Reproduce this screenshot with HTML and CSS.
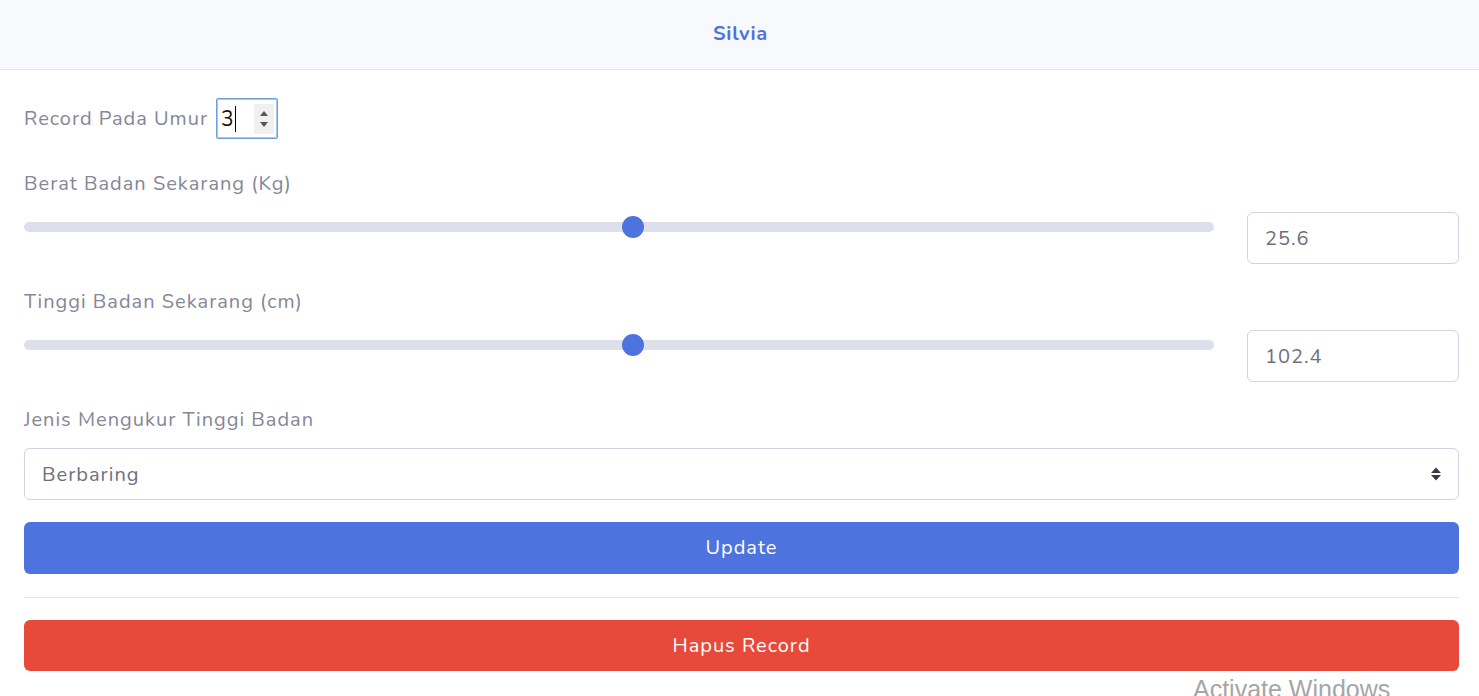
FILE: index.html
```html
<!DOCTYPE html>
<html lang="id">
<head>
<meta charset="utf-8">
<title>Silvia</title>
<link rel="stylesheet" href="styles.css">
</head>
<body>
<div class="card">
  <div class="card-header"><h6 class="title">Silvia</h6></div>
  <div class="card-body">
    <div class="age-row">
      <label class="age-label">Record Pada Umur</label>
      <div class="num-input">
        <span class="num-value">3</span><span class="caret"></span>
        <span class="spin">
          <svg width="12" height="22" viewBox="0 0 12 22"><path d="M2 8 L6 3 L10 8 Z" fill="#555"/><path d="M2 14 L6 19 L10 14 Z" fill="#555"/></svg>
        </span>
      </div>
    </div>

    <div class="group">
      <label class="lbl">Berat Badan Sekarang (Kg)</label>
      <div class="range-row">
        <input class="range" type="range" min="0" max="50" step="0.1" value="25.6">
        <input class="form-control small" type="text" value="25.6">
      </div>
    </div>

    <div class="group">
      <label class="lbl">Tinggi Badan Sekarang (cm)</label>
      <div class="range-row">
        <input class="range" type="range" min="0" max="200" step="0.1" value="102.4">
        <input class="form-control small" type="text" value="102.4">
      </div>
    </div>

    <div class="group last">
      <label class="lbl">Jenis Mengukur Tinggi Badan</label>
      <div class="select-wrap">
        <select class="form-control select">
          <option>Berbaring</option>
          <option>Berdiri</option>
        </select>
        <svg class="select-arrow" width="12" height="16" viewBox="0 0 12 16"><path d="M1 7 L6 1.5 L11 7 Z" fill="#3a3b45"/><path d="M1 9 L6 14.5 L11 9 Z" fill="#3a3b45"/></svg>
      </div>
    </div>

    <button class="btn btn-primary">Update</button>
    <hr class="divider">
    <button class="btn btn-danger">Hapus Record</button>
  </div>
</div>
<div class="watermark">Activate Windows</div>
</body>
</html>
```

FILE: styles.css
```css
html, body {
  margin: 0;
  padding: 0;
  background: #ffffff;
  overflow: hidden;
}
body {
  font-family: "Nunito", "Open Sans", "Noto Sans", sans-serif;
  font-size: 20px;
  letter-spacing: 1px;
  color: #858796;
  width: 1479px;
  height: 696px;
  position: relative;
}
.card {
  display: flex;
  flex-direction: column;
}
.card-header {
  box-sizing: border-box;
  height: 70px;
  background: #f8f9fc;
  border-bottom: 1px solid #e3e6f0;
  display: flex;
  align-items: center;
  justify-content: center;
}
.title {
  margin: 0;
  font-size: 20px;
  font-weight: 700;
  color: #4e73df;
  letter-spacing: 0.8px;
  padding-bottom: 2px;
  padding-left: 2px;
}
.card-body {
  padding: 28px 20px 0 24px;
  display: flex;
  flex-direction: column;
}
.age-row {
  display: flex;
  align-items: center;
  height: 41px;
  margin-bottom: 30px;
}
.age-label {
  line-height: 30px;
  margin-right: 8px;
  padding-top: 1px;
}
.num-input {
  box-sizing: border-box;
  width: 62px;
  height: 41px;
  border: 1px solid #6f9fdc;
  border-radius: 2px;
  box-shadow: 0 0 0 1px #a9c6ee inset;
  display: flex;
  align-items: center;
  padding-left: 4px;
  color: #111;
  font-size: 21px;
  letter-spacing: 0;
  position: relative;
}
.num-value {
  line-height: 26px;
}
.caret {
  width: 1px;
  height: 26px;
  background: #000;
  margin-left: 1px;
}
.spin {
  margin-left: auto;
  margin-right: 3px;
  width: 20px;
  height: 30px;
  background: #f0f0f0;
  display: flex;
  align-items: center;
  justify-content: center;
}
.group {
  display: flex;
  flex-direction: column;
  margin-bottom: 23px;
}
.group.last {
  margin-bottom: 22px;
}
.lbl {
  line-height: 30px;
  margin-bottom: 13px;
}
.range-row {
  display: flex;
  align-items: flex-start;
  gap: 33px;
}
.range {
  -webkit-appearance: none;
  appearance: none;
  flex: 1;
  margin: 0;
  height: 30px;
  background: transparent;
}
.range::-webkit-slider-runnable-track {
  height: 10px;
  border-radius: 5px;
  background: #dddfeb;
}
.range::-webkit-slider-thumb {
  -webkit-appearance: none;
  appearance: none;
  width: 22px;
  height: 22px;
  border-radius: 50%;
  background: #4e73df;
  border: 0;
  margin-top: -6px;
}
.form-control {
  box-sizing: border-box;
  height: 52px;
  border: 1px solid #d1d3e2;
  border-radius: 6px;
  font-family: inherit;
  font-size: 20px;
  letter-spacing: 1px;
  color: #6e707e;
  padding: 0 17px;
  background: #fff;
  outline: none;
}
.form-control.small {
  width: 212px;
  flex: none;
}
.select-wrap {
  position: relative;
}
.select {
  -webkit-appearance: none;
  appearance: none;
  width: 100%;
  display: block;
}
.select-arrow {
  position: absolute;
  right: 17px;
  top: 18px;
  pointer-events: none;
}
.btn {
  box-sizing: border-box;
  width: 100%;
  height: 52px;
  border: 0;
  border-radius: 6px;
  font-family: inherit;
  font-size: 20px;
  letter-spacing: 1px;
  color: #fff;
  cursor: pointer;
  padding: 0 0 1px;
}
.btn-primary {
  background: #4e73df;
}
.btn-danger {
  background: #e74a3b;
  height: 51px;
}
.divider {
  border: 0;
  border-top: 1px solid #e3e6f0;
  margin: 23px 0 22px;
}
.watermark {
  position: absolute;
  left: 1193px;
  top: 675px;
  font-family: "Liberation Sans", "Open Sans", sans-serif;
  font-size: 25px;
  letter-spacing: 0;
  color: #a6a6a6;
  white-space: nowrap;
}
```
